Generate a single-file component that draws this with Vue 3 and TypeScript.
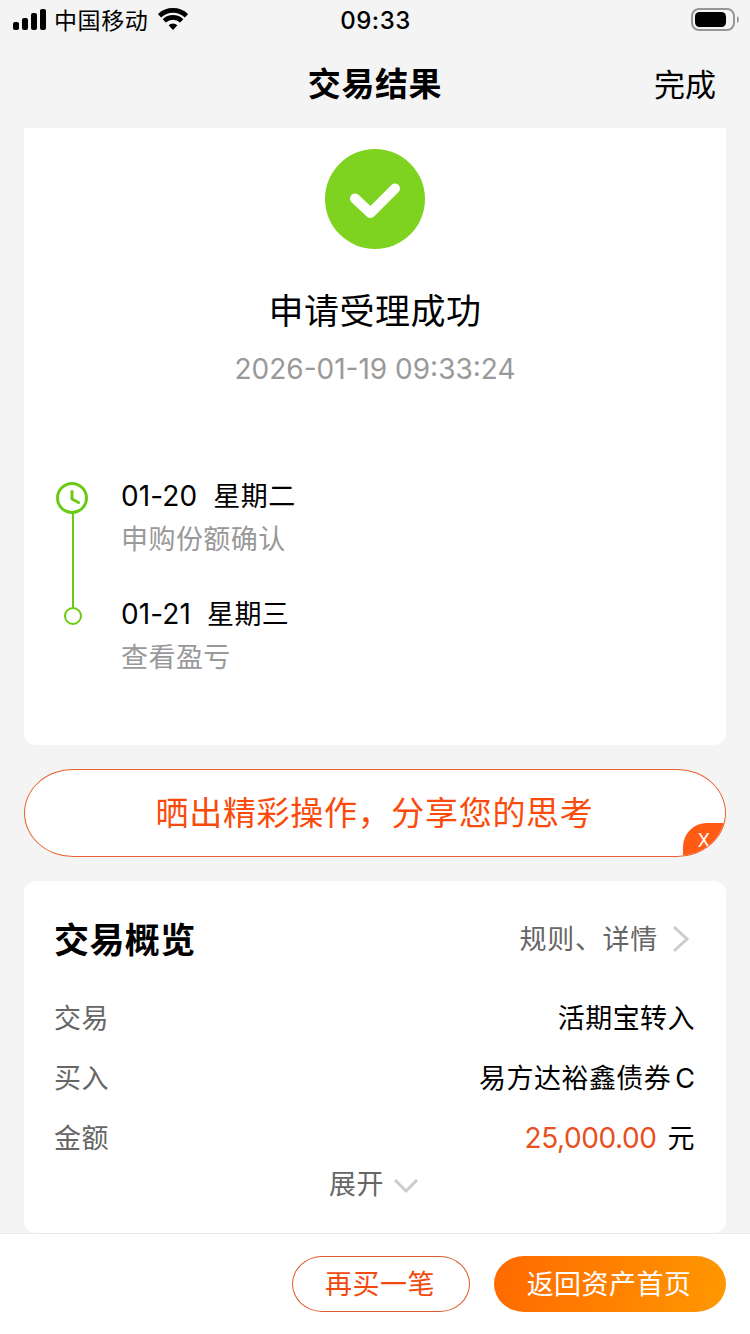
<script setup lang="ts">
interface Step { date: string; day: string; note: string }
interface Row { label: string; value: string; unit?: string; suffix?: string }

const steps: Step[] = [
  { date: '01-20', day: '星期二', note: '申购份额确认' },
  { date: '01-21', day: '星期三', note: '查看盈亏' },
]
const rows: Row[] = [
  { label: '交易', value: '活期宝转入' },
  { label: '买入', value: '易方达裕鑫债券', suffix: 'C' },
  { label: '金额', value: '25,000.00', unit: '元' },
]
</script>

<template>
  <div class="screen">
    <header class="status">
      <div class="carrier">
        <svg class="signal" width="34" height="22" viewBox="0 0 34 22">
          <rect x="0" y="14" width="6" height="8" rx="2" />
          <rect x="9" y="10" width="6" height="12" rx="2" />
          <rect x="18" y="5" width="6" height="17" rx="2" />
          <rect x="27" y="1" width="6" height="21" rx="2" />
        </svg>
        <span>中国移动</span>
        <svg class="wifi" width="30" height="22" viewBox="0 0 30 22">
          <path d="M1.500 7.800a19.500 19.500 0 0 1 27 0" />
          <path d="M6.300 12.900a12.500 12.500 0 0 1 17.400 0" />
          <path class="dot" d="M10.600 17.200a6.600 6.600 0 0 1 8.800 0L15 21.900z" />
        </svg>
      </div>
      <time class="clock">09:33</time>
      <svg class="battery" width="48" height="24" viewBox="0 0 48 24">
        <rect x="1" y="1" width="42" height="21" rx="7" fill="none" stroke="#969696" stroke-width="2" />
        <rect x="4" y="4" width="31" height="15" rx="4.500" />
        <path d="M46 8q2 1 2 3.500t-2 3.500z" fill="#969696" />
      </svg>
    </header>

    <nav class="nav">
      <h1>交易结果</h1>
      <span class="done">完成</span>
    </nav>

    <main class="content">
      <section class="result">
        <svg class="check" width="100" height="100" viewBox="0 0 100 100">
          <circle cx="50" cy="50" r="50" fill="#7ed321" />
          <path d="M30 49.500L45.500 64L70 39.500" fill="none" stroke="#fff" stroke-width="10" stroke-linecap="round" stroke-linejoin="round" />
        </svg>
        <h2>申请受理成功</h2>
        <p class="stamp">2026-01-19 09:33:24</p>
        <div class="timeline">
          <svg class="rail" width="34" height="146" viewBox="0 0 34 146">
            <path d="M17 32V127" stroke-width="2" />
            <circle cx="16" cy="16" r="14.500" stroke-width="3" />
            <path d="M16 9.500V17L22.500 20.500" stroke-width="3" stroke-linecap="round" stroke-linejoin="round" />
            <circle cx="17" cy="134" r="8" stroke-width="2" />
          </svg>
          <ul class="steps">
            <li v-for="s in steps" :key="s.date">
              <div class="when"><span class="date">{{ s.date }}</span><span class="day">{{ s.day }}</span></div>
              <div class="note">{{ s.note }}</div>
            </li>
          </ul>
        </div>
      </section>

      <section class="share">
        <span>晒出精彩操作，分享您的思考</span>
        <i class="close">X</i>
      </section>

      <section class="overview">
        <div class="head">
          <h3>交易概览</h3>
          <span class="more">规则、详情</span>
          <svg width="18" height="28" viewBox="0 0 18 28"><path d="M2 2L15 14L2 26" /></svg>
        </div>
        <div v-for="r in rows" :key="r.label" class="row">
          <span class="label">{{ r.label }}</span>
          <span v-if="r.unit" class="value"><b>{{ r.value }}</b><span class="unit">{{ r.unit }}</span></span>
          <span v-else class="value">{{ r.value }}<span v-if="r.suffix" class="suffix">{{ r.suffix }}</span></span>
        </div>
        <div class="expand">
          <span>展开</span>
          <svg width="26" height="16" viewBox="0 0 26 16"><path d="M2 2L13 13L24 2" /></svg>
        </div>
      </section>
    </main>

    <footer class="actions">
      <button class="again">再买一笔</button>
      <button class="home">返回资产首页</button>
    </footer>
  </div>
</template>

<style>
body { margin: 0; background: #f4f4f4; }
</style>

<style scoped>
* { box-sizing: border-box; }
.screen {
  width: 750px; height: 1334px; overflow: hidden; display: flex; flex-direction: column;
  background: #f4f4f4; color: #000;
  font-family: Inter, "Noto Sans CJK SC", sans-serif; font-size: 27px; letter-spacing: .45px;
}
h1, h2, h3, p, ul { margin: 0; padding: 0; list-style: none; }
.status { height: 40px; display: grid; grid-template-columns: 1fr auto 1fr; align-items: center; padding: 0 12px 0 13px; flex: none; }
.carrier { display: flex; align-items: center; font-size: 23px; letter-spacing: .6px; line-height: 38px; }
.signal { margin-right: 7px; margin-top: -2px; }
.carrier span { padding-top: 1px; }
.wifi { margin-left: 10px; margin-top: -2px; fill: none; stroke: #000; stroke-width: 4.700; }
.wifi .dot { fill: #000; stroke: none; }
.clock { font-size: 24px; font-weight: 500; letter-spacing: .5px; line-height: 39px; padding-top: 1px; }
.battery { justify-self: end; margin: -1px -1px 0 0; }
.nav { height: 88px; flex: none; display: grid; grid-template-columns: 1fr auto 1fr; align-items: center; }
.nav h1 { grid-column: 2; font-size: 33px; line-height: 86px; padding-bottom: 2px; font-weight: 700; letter-spacing: .6px; }
.done { justify-self: end; margin-right: 34px; font-size: 31px; letter-spacing: 0; line-height: 90px; }
.content { flex: 1; min-height: 0; padding: 0 24px; display: flex; flex-direction: column; gap: 24px; overflow: hidden; }
.result { flex: none; height: 617px; background: #fff; border-radius: 0 0 12px 12px; display: flex; flex-direction: column; align-items: center; padding-top: 21px; }
.result h2 { margin-top: 36px; font-size: 35px; font-weight: 400; line-height: 52px; letter-spacing: .500px; }
.stamp { margin-top: 12px; color: #999; font-size: 28px; line-height: 40px; letter-spacing: 0; }
.timeline { align-self: stretch; margin-top: 93px; padding-left: 32px; display: flex; gap: 31px; }
.rail { fill: none; stroke: #6bcb12; }
.steps li { height: 118px; }
.when { line-height: 40px; height: 40px; margin-top: -6px; display: flex; }
.steps li + li .when { margin-top: 0; }
.steps li:first-child { height: 124px; margin-bottom: -6px; }
.date { letter-spacing: .1px; margin-right: 16px; font-size: 28px; }
.day { padding-top: 1px; }
.note { color: #999; line-height: 48px; }
.share {
  position: relative; flex: none; height: 88px; overflow: hidden; background: #fff; color: #fa4b0c;
  border: 1px solid #e9602e; border-radius: 49px / 44px; text-align: center;
  font-size: 33px; letter-spacing: .680px; line-height: 86px; padding-right: 1px;
}
.close {
  position: absolute; right: 0; bottom: 0; width: 42px; height: 33px; border-radius: 24px 0 0 0; background: #ff5b14;
  color: #fff; font-style: normal; font-size: 18px; line-height: 36px; letter-spacing: 0;
}
.overview { flex: none; height: 352px; background: #fff; border-radius: 12px; padding: 28px 31px 0 30px; }
.head { display: flex; align-items: center; height: 62px; margin-bottom: 17px; }
.head h3 { flex: 1; font-size: 35px; letter-spacing: .4px; line-height: 62px; }
.more { color: #666; line-height: 60px; letter-spacing: .7px; }
.head svg { margin: -2px 5px 0 14px; }
.head svg, .expand svg { fill: none; stroke: #ccc; stroke-width: 3; }
.row { display: flex; justify-content: space-between; height: 60px; line-height: 61px; }
.label { color: #666; }
.value b { font-weight: 400; color: #e8501e; letter-spacing: -.4px; font-size: 28px; }
.unit { margin-left: 11px; }
.suffix { margin-left: 4px; letter-spacing: 0; }
.expand { display: flex; justify-content: center; align-items: center; gap: 9px; color: #666; height: 36px; line-height: 36px; margin-top: -1px; padding-right: 1px; }
.expand svg { margin-top: 1px; }
.actions { flex: none; height: 101px; border-top: 1px solid #e9e9e9; background: #fff; display: flex; justify-content: flex-end; gap: 24px; padding: 22px 24px 0; }
button { height: 56px; padding: 1px 2px 0 0; margin: 0; border-radius: 30px / 28px; font: inherit; letter-spacing: .450px; line-height: 54px; }
.again { width: 178px; border: 1px solid #e05a30; background: #fff; color: #f04a10; }
.home { width: 232px; border: 0; color: #fff; background: linear-gradient(100deg, #ff6900, #ff9800); }
</style>
